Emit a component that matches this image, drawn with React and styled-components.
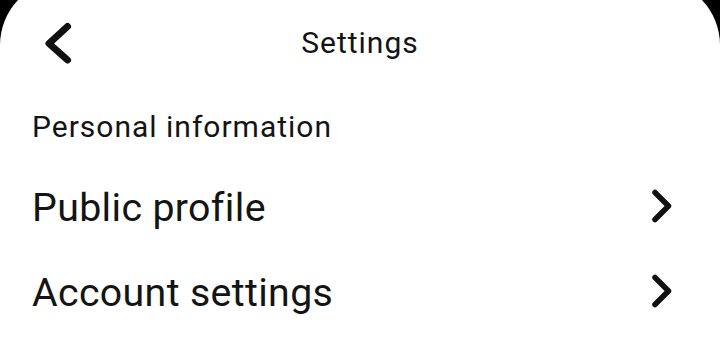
import styled, { createGlobalStyle } from "styled-components";

// styles
const GlobalStyle = createGlobalStyle`
    html, body {
        margin: 0;
        padding: 0;
        background: #000;
        overflow: hidden;
    }
    body {
        font-family: Roboto, "Noto Sans", Arial, sans-serif;
        -webkit-font-smoothing: antialiased;
    }
`;

const Sheet = styled.div`
    margin-top: -20px;
    padding-top: 39px;
    height: 373px;
    box-sizing: border-box;
    background: #fff;
    border-radius: 65px 65px 0 0;
    color: #141414;
`;

const Header = styled.header`
    display: grid;
    grid-template-columns: 1fr auto 1fr;
    align-items: center;
    height: 48px;
`;

const BackButton = styled.button`
    justify-self: start;
    display: flex;
    margin: 0 0 0 38px;
    padding: 0;
    border: 0;
    background: none;
    cursor: pointer;
`;

const Title = styled.h1`
    margin: 0;
    font-size: 30px;
    font-weight: 400;
    line-height: 36px;
    letter-spacing: 1px;
`;

const SectionLabel = styled.div`
    margin: 42px 0 20px;
    padding-left: 32px;
    font-size: 30px;
    line-height: 36px;
    letter-spacing: 1px;
`;

const Row = styled.a`
    display: flex;
    align-items: center;
    justify-content: space-between;
    height: 85px;
    padding: 0 42px 0 32px;
    font-size: 39.3px;
    letter-spacing: 0.35px;
    color: inherit;
    text-decoration: none;
    cursor: pointer;

    svg {
        margin-bottom: 4px;
    }
`;

// icons
const BackIcon = () => (
    <svg width="36" height="48" viewBox="0 0 36 48" fill="none">
        <path
            d="M29.5 7.5 L11 24.5 L29.5 41"
            stroke="#111"
            strokeWidth="7"
            strokeLinecap="round"
            strokeLinejoin="round"
        />
    </svg>
);

const ChevronRight = () => (
    <svg width="28" height="36" viewBox="0 0 28 36" fill="none">
        <path
            d="M5 4.5 L18.5 18 L5 31.5"
            stroke="#111"
            strokeWidth="5.5"
            strokeLinecap="round"
            strokeLinejoin="round"
        />
    </svg>
);

// component
const items = ["Public profile", "Account settings"];

const App = () => {
    return (
        <>
            <GlobalStyle />
            <Sheet>
                <Header>
                    <BackButton aria-label="Back">
                        <BackIcon />
                    </BackButton>
                    <Title>Settings</Title>
                    <span />
                </Header>
                <SectionLabel>Personal information</SectionLabel>
                {items.map((label) => (
                    <Row key={label}>
                        <span>{label}</span>
                        <ChevronRight />
                    </Row>
                ))}
            </Sheet>
        </>
    );
};

export default App;
